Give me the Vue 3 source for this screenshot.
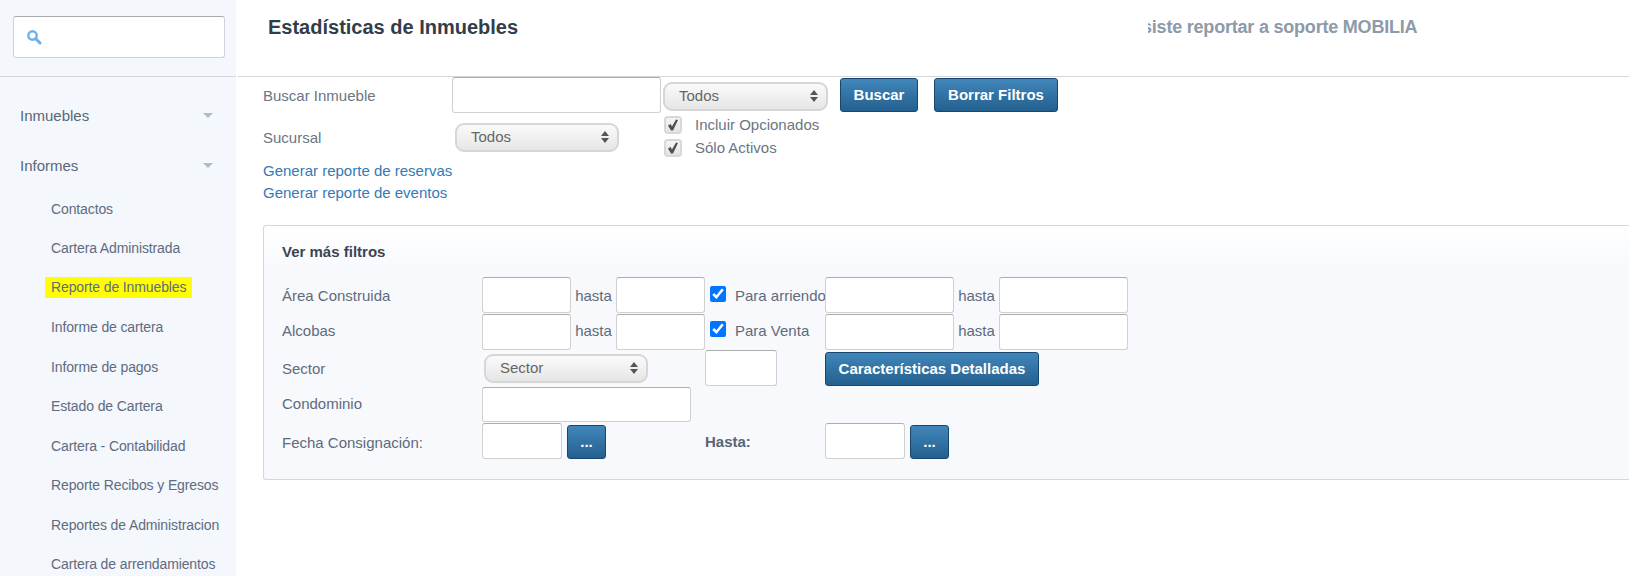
<script setup>
const subItems = [
  'Contactos',
  'Cartera Administrada',
  'Reporte de Inmuebles',
  'Informe de cartera',
  'Informe de pagos',
  'Estado de Cartera',
  'Cartera - Contabilidad',
  'Reporte Recibos y Egresos',
  'Reportes de Administracion',
  'Cartera de arrendamientos'
]
</script>

<template>
  <div class="app">
    <aside class="sidebar">
      <div class="side-top">
        <div class="search">
          <svg width="16" height="16" viewBox="0 0 16 16" class="search-icon">
            <circle cx="6.5" cy="6.5" r="4.2" fill="none" stroke="#6fb0ea" stroke-width="2.4" />
            <path d="M9.6 9.6 L14 14" stroke="#6fb0ea" stroke-width="3" stroke-linecap="round" />
          </svg>
          <input class="search-input" type="text" />
        </div>
      </div>
      <nav class="nav">
        <div class="nav-head"><span>Inmuebles</span><i class="caret"></i></div>
        <div class="nav-head"><span>Informes</span><i class="caret"></i></div>
        <ul class="sub">
          <li v-for="item in subItems" :key="item">
            <span :class="{ mark: item === 'Reporte de Inmuebles' }">{{ item }}</span>
          </li>
        </ul>
      </nav>
    </aside>

    <main class="main">
      <header class="head">
        <h1 class="title">Estadísticas de Inmuebles</h1>
        <div class="ticker"><span>siste reportar a soporte MOBILIA</span></div>
      </header>

      <section class="form">
        <div class="top-grid">
          <label class="lbl">Buscar Inmueble</label>
          <input class="field f-search" type="text" />
          <div class="top-actions">
            <div class="select s-todos-a">
              <span>Todos</span>
              <svg class="updown" width="8" height="12" viewBox="0 0 8 12"><path d="M4 0 L8 5 H0 Z M4 12 L0 7 H8 Z" fill="#555" /></svg>
            </div>
            <button class="btn b-buscar">Buscar</button>
            <button class="btn b-borrar">Borrar Filtros</button>
          </div>

          <label class="lbl l-suc">Sucursal</label>
          <div class="select s-todos-b">
            <span>Todos</span>
            <svg class="updown" width="8" height="12" viewBox="0 0 8 12"><path d="M4 0 L8 5 H0 Z M4 12 L0 7 H8 Z" fill="#555" /></svg>
          </div>
          <div class="checks">
            <div class="check-row">
              <span class="gray-check"><svg width="12" height="12" viewBox="0 0 12 12"><path d="M1 6.5 L3.6 5 L5 7.5 L9 0.5 L11 1 L6 11.5 L4 11.5 Z" fill="#505050" /></svg></span>
              <span>Incluir Opcionados</span>
            </div>
            <div class="check-row">
              <span class="gray-check"><svg width="12" height="12" viewBox="0 0 12 12"><path d="M1 6.5 L3.6 5 L5 7.5 L9 0.5 L11 1 L6 11.5 L4 11.5 Z" fill="#505050" /></svg></span>
              <span>Sólo Activos</span>
            </div>
          </div>
        </div>

        <div class="links">
          <a>Generar reporte de reservas</a>
          <a>Generar reporte de eventos</a>
        </div>

        <div class="panel">
          <div class="panel-title">Ver más filtros</div>
          <div class="filters">
            <span class="cell">Área Construida</span>
            <input class="field" type="text" />
            <span class="cell hasta">hasta</span>
            <input class="field" type="text" />
            <label class="cell blue"><input type="checkbox" checked /><span>Para arriendo</span></label>
            <input class="field" type="text" />
            <span class="cell hasta">hasta</span>
            <input class="field" type="text" />

            <span class="cell up">Alcobas</span>
            <input class="field" type="text" />
            <span class="cell hasta up">hasta</span>
            <input class="field" type="text" />
            <label class="cell blue up"><input type="checkbox" checked /><span>Para Venta</span></label>
            <input class="field" type="text" />
            <span class="cell hasta up">hasta</span>
            <input class="field" type="text" />

            <span class="cell">Sector</span>
            <div class="sector-wrap">
              <div class="select s-sector">
                <span>Sector</span>
                <svg class="updown" width="8" height="12" viewBox="0 0 8 12"><path d="M4 0 L8 5 H0 Z M4 12 L0 7 H8 Z" fill="#555" /></svg>
              </div>
            </div>
            <input class="field f-small" type="text" />
            <div class="wide-btn"><button class="btn b-detail">Características Detalladas</button></div>

            <span class="cell up">Condominio</span>
            <div class="condo-wrap"><input class="field f-condo" type="text" /></div>

            <span class="cell down">Fecha Consignación:</span>
            <div class="date-wrap">
              <input class="field f-date" type="text" />
              <button class="btn b-dots">...</button>
            </div>
            <b class="cell c-hasta">Hasta:</b>
            <div class="date-wrap d-hasta">
              <input class="field f-date" type="text" />
              <button class="btn b-dots">...</button>
            </div>
          </div>
        </div>
      </section>
    </main>
  </div>
</template>

<style>
html, body { margin: 0; background: #fff; overflow: hidden; }
</style>

<style scoped>
.app {
  display: flex;
  width: 1629px;
  height: 576px;
  overflow: hidden;
  font-family: "Liberation Sans", Arial, sans-serif;
  font-size: 15px;
  color: #5f6b7a;
}
.sidebar {
  width: 236px;
  flex: none;
  background: #f4f7fb;
  margin-right: 2px;
}
.side-top {
  margin-top: 2px;
  padding: 14px 11px 0 13px;
  box-sizing: border-box;
  border-bottom: 1px solid #d3d6da;
  height: 75px;
}
.search {
  display: flex;
  align-items: center;
  height: 42px;
  box-sizing: border-box;
  border: 1px solid #cfd3d8;
  border-top-color: #a9acaf;
  border-radius: 3px;
  background: #fff;
  padding-left: 12px;
}
.search-icon { flex: none; }
.search-input {
  border: 0;
  outline: 0;
  flex: 1;
  min-width: 0;
  background: transparent;
}
.nav-head {
  display: flex;
  justify-content: space-between;
  align-items: center;
  height: 50px;
  padding: 0 23px 0 20px;
  font-size: 15px;
  color: #5a6779;
}
.nav-head:first-child { margin-top: 13px; }
.caret {
  width: 0;
  height: 0;
  border-left: 5px solid transparent;
  border-right: 5px solid transparent;
  border-top: 5px solid #a9bcd2;
}
.sub {
  list-style: none;
  margin: -1px 0 0;
  padding: 0 0 0 51px;
  font-size: 14px;
  letter-spacing: -0.12px;
}
.sub li {
  height: 39.5px;
  display: flex;
  align-items: center;
  color: #5f6b80;
  white-space: nowrap;
}
.mark {
  background: #ffff00;
  margin-left: -6px;
  padding: 2px 6px;
  line-height: 17px;
}

.main { flex: 1; min-width: 0; }
.head {
  box-sizing: border-box;
  border-bottom: 1px solid #d3d6da;
  height: 77px;
  display: flex;
  align-items: flex-start;
  padding: 15px 0 0 30px;
}
.title {
  margin: 0;
  font-size: 20px;
  line-height: 24px;
  font-weight: 700;
  color: #333d4a;
  width: 880px;
  flex: none;
}
.ticker {
  overflow: hidden;
  white-space: nowrap;
  width: 290px;
  font-size: 18px;
  letter-spacing: -0.21px;
  font-weight: 700;
  line-height: 24px;
  color: #8c9aa9;
}
.ticker span { display: block; margin-left: -6px; }

.form { padding-left: 25px; }
.top-grid {
  display: grid;
  grid-template-columns: 189px 212px 1fr;
  grid-template-rows: 39px 45px;
}
.lbl { display: flex; align-items: center; height: 36px; color: #6c7582; }
.l-suc { height: 42px; }
.field {
  box-sizing: border-box;
  height: 36px;
  border: 1px solid #d0d0d0;
  border-top-color: #adadad;
  border-radius: 3px;
  background: #fff;
  margin: 0;
  padding: 0;
  outline: 0;
  width: 100%;
}
.f-search { width: 209px; }
.top-actions { display: flex; align-items: flex-start; }
.select {
  position: relative;
  box-sizing: border-box;
  width: 164px;
  height: 29px;
  border: 2px solid #d6d6d6;
  border-radius: 9px;
  background: linear-gradient(#fafafa, #e6e6e6);
  display: flex;
  align-items: center;
  padding: 0 0 3px 14px;
  color: #666;
  font-size: 15px;
}
.updown { position: absolute; right: 8px; top: 6px; }
.s-todos-a { margin: 5px 0 0 -1px; width: 165px; }
.s-todos-b { margin: 7px 0 0 3px; }
.btn {
  font-family: "Liberation Sans", Arial, sans-serif;
  font-size: 15px;
  font-weight: 700;
  color: #fff;
  background: linear-gradient(#4186ba, #23608f);
  border: 1px solid #17476f;
  border-radius: 3px;
  height: 34px;
  padding: 0 0 2px;
}
.b-buscar { width: 78px; margin: 1px 0 0 12px; }
.b-borrar { width: 124px; margin: 1px 0 0 16px; }
.checks { margin-top: -3px; color: #6c7582; }
.check-row {
  display: flex;
  align-items: center;
  gap: 13px;
  height: 23px;
}
.gray-check {
  box-sizing: border-box;
  width: 18px;
  height: 18px;
  border: 2px solid #d8d8d8;
  border-radius: 4px;
  background: linear-gradient(#f5f5f5, #e4e4e4);
  display: flex;
  align-items: center;
  justify-content: center;
}
.links {
  display: flex;
  flex-direction: column;
  line-height: 22px;
  margin-top: -1px;
  color: #337ab7;
}
.panel {
  box-sizing: border-box;
  height: 255px;
  margin-top: 21px;
  border: 1px solid #cfd9e4;
  border-right: 0;
  border-radius: 3px 0 0 3px;
  background: linear-gradient(#fff, #f7f9fd 45px);
  padding-left: 18px;
}
.panel-title {
  height: 51px;
  padding-top: 17px;
  box-sizing: border-box;
  font-weight: 700;
  color: #3a4554;
  line-height: 18px;
}
.filters {
  display: grid;
  grid-template-columns: 200px 89px 45px 89px 120px 129px 45px 129px;
  grid-template-rows: 37px 36px 37px 36px 36px;
}
.cell { display: flex; align-items: center; color: #5f6b7a; white-space: nowrap; }
.up { padding-bottom: 3px; }
.down { padding-top: 2px; }
.hasta { justify-content: center; }
.blue { gap: 9px; padding-left: 5px; }
.blue input { margin: 0 0 4px; width: 16px; height: 16px; accent-color: #0075ff; flex: none; }
.sector-wrap { grid-column: 2 / span 3; padding: 4px 0 0 2px; }
.f-small { width: 72px; }
.wide-btn { grid-column: 6 / span 3; padding-top: 2px; }
.b-detail { width: 214px; }
.condo-wrap { grid-column: 2 / span 7; }
.f-condo { width: 209px; height: 35px; }
.date-wrap { grid-column: 2 / span 3; display: flex; align-items: flex-start; gap: 5px; }
.f-date { width: 80px; }
.b-dots { width: 39px; margin-top: 2px; }
.c-hasta { grid-column: 5; color: #5a6572; }
.d-hasta { grid-column: 6 / span 3; }
</style>
